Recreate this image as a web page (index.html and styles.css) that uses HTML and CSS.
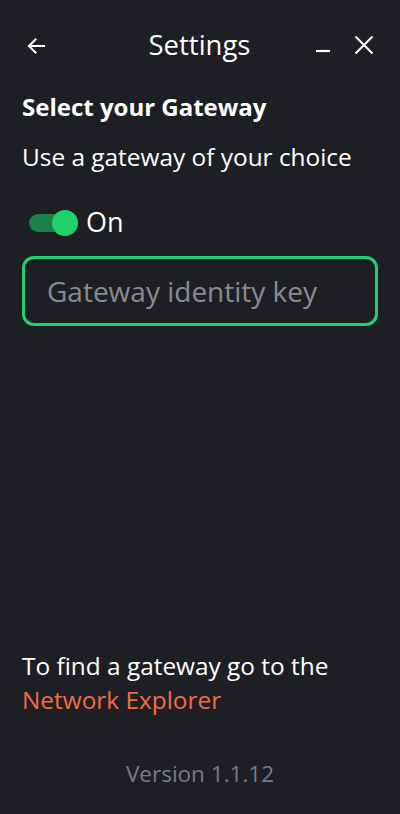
FILE: index.html
```html
<!DOCTYPE html>
<html lang="en">
<head>
<meta charset="utf-8">
<title>Settings</title>
<link rel="stylesheet" href="styles.css">
</head>
<body>
<div class="app">
  <header class="topbar">
    <button class="icon-btn back" aria-label="Back">
      <svg width="20" height="20" viewBox="0 0 20 20"><path d="M18 10H3M9.5 3.5L3 10l6.5 6.5" fill="none" stroke="#fff" stroke-width="2" stroke-linecap="square"/></svg>
    </button>
    <h1 class="title">Settings</h1>
    <div class="win-controls">
      <button class="icon-btn" aria-label="Minimize">
        <svg width="14" height="20" viewBox="0 0 14 20"><path d="M0 16H14" stroke="#fff" stroke-width="2.2"/></svg>
      </button>
      <button class="icon-btn" aria-label="Close">
        <svg width="20" height="20" viewBox="0 0 20 20"><path d="M1.5 1.5L18.5 18.5M18.5 1.5L1.5 18.5" stroke="#fff" stroke-width="2"/></svg>
      </button>
    </div>
  </header>

  <main class="content">
    <h2 class="section-title">Select your Gateway</h2>
    <p class="section-desc">Use a gateway of your choice</p>
    <label class="toggle-row">
      <span class="switch"><span class="track"></span><span class="knob"></span></span>
      <span class="toggle-label">On</span>
    </label>
    <div class="field">
      <input class="field-input" type="text" placeholder="Gateway identity key">
    </div>
  </main>

  <footer class="footer">
    <p class="hint">To find a gateway go to the<br><a class="link" href="#">Network Explorer</a></p>
    <p class="version">Version 1.1.12</p>
  </footer>
</div>
</body>
</html>
```
FILE: styles.css
```css
* { box-sizing: border-box; }
html, body { margin: 0; padding: 0; height: 100%; }
body {
  background: #1e1f24;
  font-family: "Open Sans", "Noto Sans", sans-serif;
  color: #fff;
}
.app {
  height: 814px;
  display: flex;
  flex-direction: column;
  padding: 0 22px;
}
.topbar {
  display: flex;
  align-items: center;
  height: 90px;
}
.icon-btn {
  background: none;
  border: 0;
  padding: 0;
  display: flex;
  align-items: center;
  justify-content: center;
  cursor: pointer;
}
.back { margin-left: 4px; margin-top: 1px; }
.title {
  flex: 1;
  text-align: center;
  font-size: 27.5px;
  font-weight: 400;
  margin: 0;
  padding-left: 37px;
  line-height: 36px;
}
.win-controls {
  display: flex;
  align-items: center;
  gap: 24px;
  margin-right: 4px;
}
.content {
  flex: 1;
  display: flex;
  flex-direction: column;
}
.section-title {
  font-size: 24px;
  font-weight: 700;
  margin: 1px 0 0;
  line-height: 32px;
}
.section-desc {
  font-size: 24.4px;
  margin: 18px 0 0;
  line-height: 32px;
}
.toggle-row {
  display: flex;
  align-items: center;
  margin-top: 34px;
  margin-left: 7px;
  gap: 8px;
  height: 30px;
}
.switch {
  position: relative;
  width: 49px;
  height: 26px;
  display: block;
  margin-top: 2px;
}
.track {
  position: absolute;
  left: 0;
  top: 4px;
  width: 40px;
  height: 18px;
  border-radius: 9px;
  background: #1d8048;
}
.knob {
  position: absolute;
  right: 0;
  top: 0;
  width: 26px;
  height: 26px;
  border-radius: 50%;
  background: #22d06a;
}
.toggle-label {
  font-size: 27px;
  line-height: 30px;
}
.field {
  margin-top: 19px;
}
.field-input {
  width: 100%;
  height: 70px;
  border: 3px solid #21d073;
  border-radius: 12px;
  background: transparent;
  color: #fff;
  font-family: "Open Sans", "Noto Sans", sans-serif;
  font-size: 28px;
  padding: 0 22px;
  outline: none;
}
.field-input::placeholder { color: #8a8b8f; }
.footer {
  padding-bottom: 25px;
}
.hint {
  font-size: 24.4px;
  line-height: 34px;
  margin: 0;
}
.link {
  color: #f26b45;
  text-decoration: none;
}
.version {
  text-align: center;
  color: #7b7c80;
  font-size: 22.5px;
  margin: 42px 0 0;
  line-height: 30px;
}
```
